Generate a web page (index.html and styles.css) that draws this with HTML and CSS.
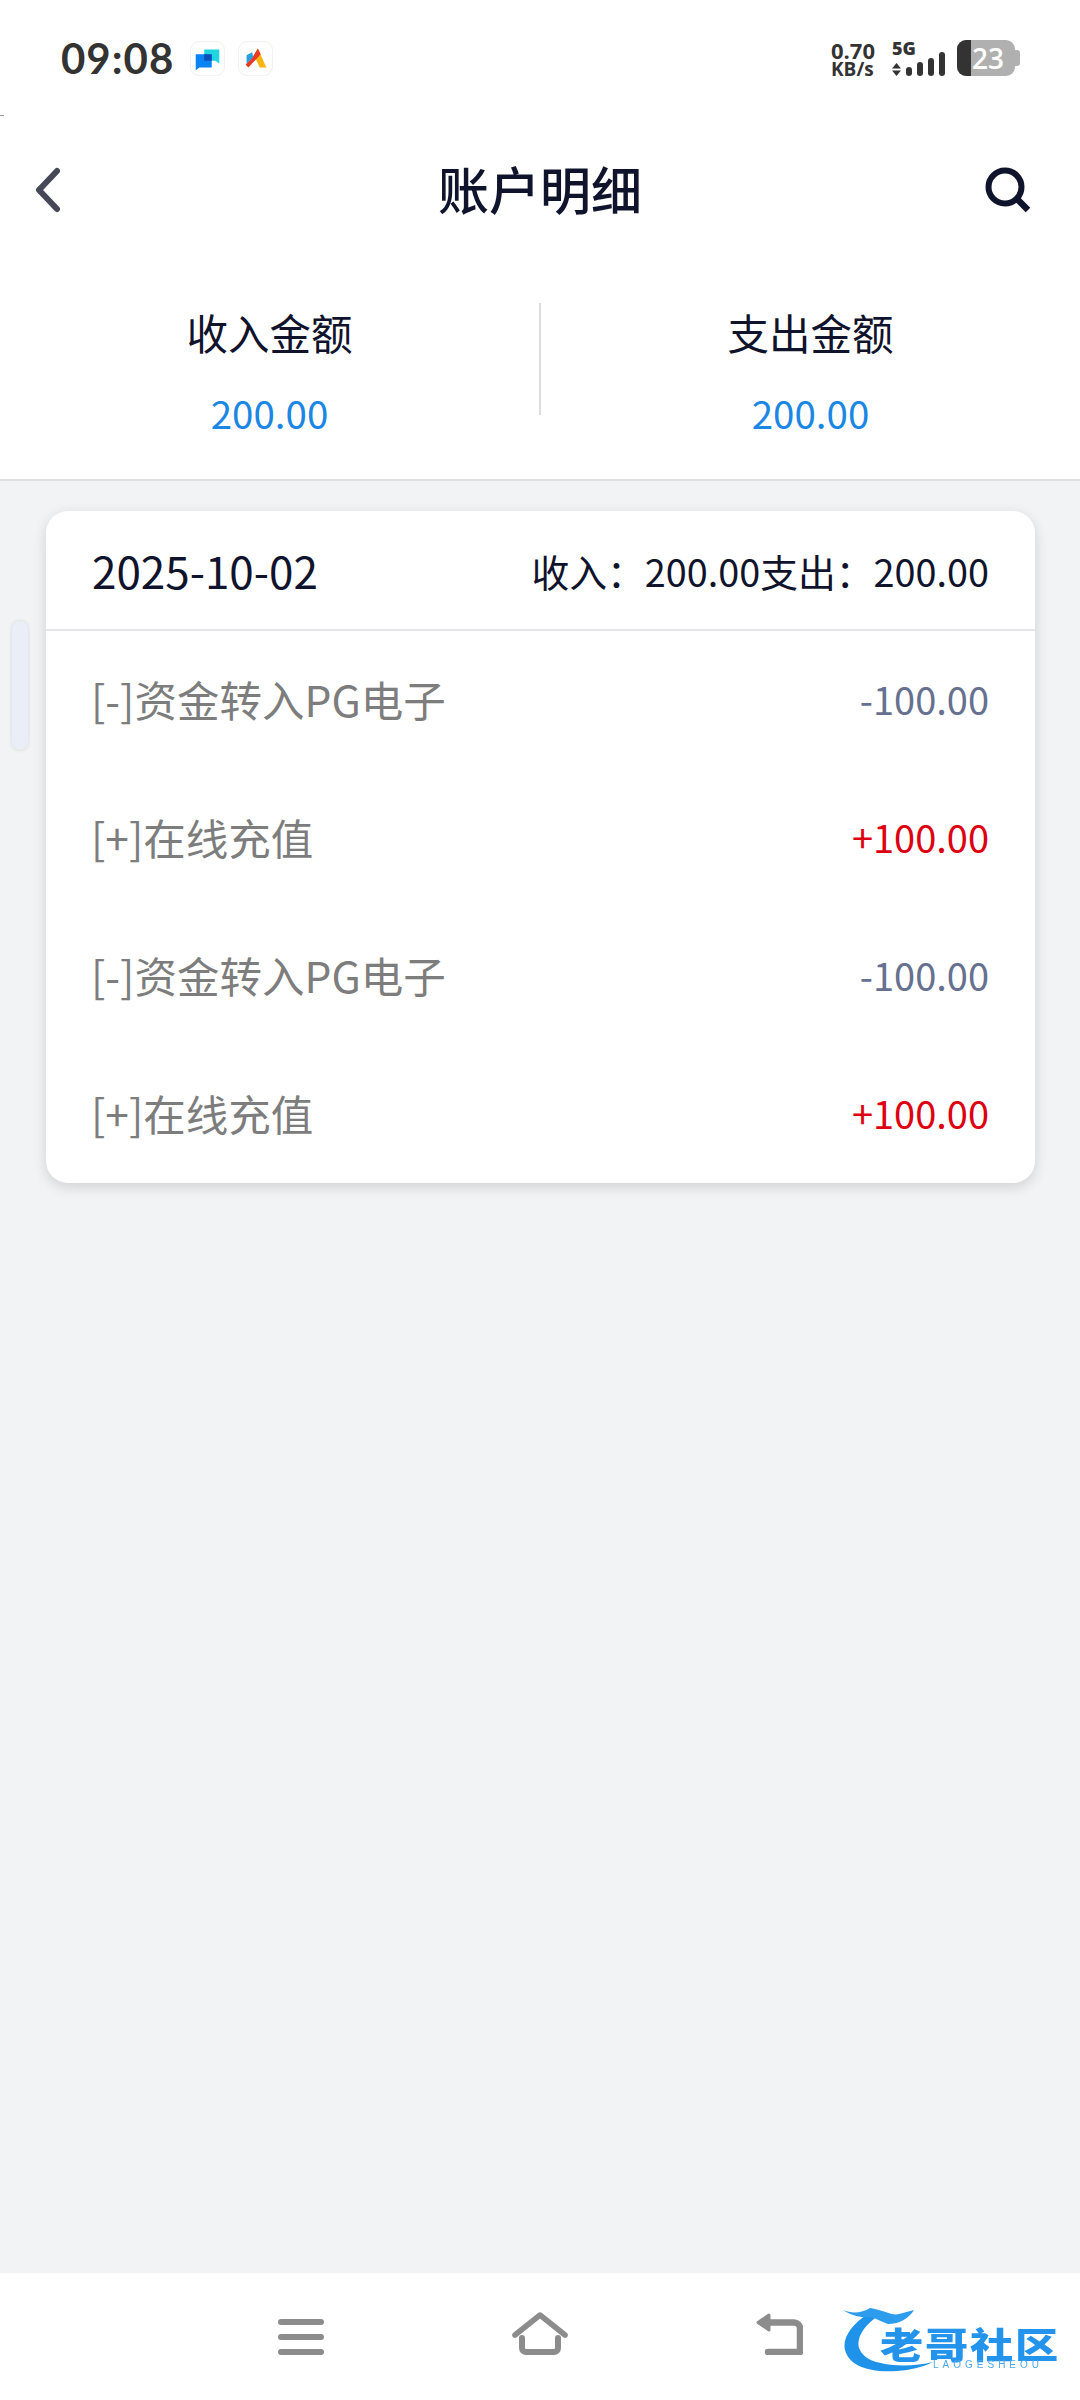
FILE: index.html
```html
<!DOCTYPE html>
<html lang="zh-CN">
<head>
<meta charset="utf-8">
<title>账户明细</title>
<link rel="stylesheet" href="styles.css">
</head>
<body>
<div class="page">
  <div class="status">
    <div class="status-left">
      <span class="time">09:08</span>
      <span class="app-icon">
        <svg viewBox="0 0 35 35" width="33" height="33"><path d="M14 8h16v15l-4-3H14z" fill="#1fd6e0"/><path d="M5 13h17v14H9l-4 3z" fill="#0a84f5"/><path d="M14 13h8v7h-8z" fill="#0b4fb8"/></svg>
      </span>
      <span class="app-icon">
        <svg viewBox="0 0 35 35" width="33" height="33"><path d="M20 7l9 20h-7l-6-13z" fill="#fbb40f"/><path d="M20 7l3 6-13 14-3-3 8-9z" fill="#ea3a26"/><path d="M8 14l6-3 1 5-7 7z" fill="#22a3e0"/></svg>
      </span>
    </div>
    <div class="status-right">
      <div class="speed"><span class="speed-num">0.70</span><span class="speed-unit">KB/s</span></div>
      <div class="signal">
        <span class="net">5G</span>
        <div class="bars">
          <svg class="arrows" viewBox="0 0 9 13" width="9" height="13"><path d="M4.500 0L9 5.500H0zM4.500 13L0 7.500h9z" fill="#333"/></svg>
          <i class="bar b1"></i><i class="bar b2"></i><i class="bar b3"></i><i class="bar b4"></i>
        </div>
      </div>
      <div class="battery"><i class="battery-fill"></i><span class="battery-num">23</span></div><i class="battery-cap"></i>
    </div>
  </div>

  <header class="nav">
    <svg class="nav-back" viewBox="0 0 28 46" width="28" height="46"><path d="M23 4L5 23l18 19" fill="none" stroke="#474857" stroke-width="6" stroke-linecap="round" stroke-linejoin="round"/></svg>
    <h1 class="nav-title">账户明细</h1>
    <svg class="nav-search" viewBox="0 0 46 46" width="46" height="46"><circle cx="20" cy="20" r="16.500" fill="none" stroke="#10132c" stroke-width="6"/><path d="M32 32l11 11" stroke="#10132c" stroke-width="6.500"/></svg>
  </header>

  <section class="summary">
    <div class="sum-col"><div class="sum-label">收入金额</div><div class="sum-value">200.00</div></div>
    <div class="sum-rule"></div>
    <div class="sum-col"><div class="sum-label">支出金额</div><div class="sum-value">200.00</div></div>
  </section>

  <main class="content">
    <section class="card">
      <div class="card-head">
        <span class="date">2025-10-02</span>
        <span class="totals">收入：200.00支出：200.00</span>
      </div>
      <div class="row"><span class="row-name">[-]资金转入PG电子</span><span class="amt out">-100.00</span></div>
      <div class="row"><span class="row-name">[+]在线充值</span><span class="amt in">+100.00</span></div>
      <div class="row"><span class="row-name">[-]资金转入PG电子</span><span class="amt out">-100.00</span></div>
      <div class="row"><span class="row-name">[+]在线充值</span><span class="amt in">+100.00</span></div>
    </section>
  </main>

  <nav class="sysbar">
    <svg viewBox="0 0 46 36" width="46" height="36"><path d="M3 3h40M3 18h40M3 33h40" stroke="#8c8c8c" stroke-width="6" stroke-linecap="round"/></svg>
    <svg viewBox="0 0 56 43" width="56" height="43"><path d="M3 23L28 3l25 20" fill="none" stroke="#8c8c8c" stroke-width="5.500" stroke-linecap="round" stroke-linejoin="round"/><path d="M10 26v10a4 4 0 0 0 4 4h28a4 4 0 0 0 4-4V26" fill="none" stroke="#8c8c8c" stroke-width="6" stroke-linecap="round"/></svg>
    <svg viewBox="0 0 47 42" width="47" height="42"><path d="M12 9.500H38a6 6 0 0 1 6 6V39H12" fill="none" stroke="#8c8c8c" stroke-width="6.500" stroke-linecap="round" stroke-linejoin="round"/><path d="M2 9.500L13 2v15z" fill="#8c8c8c" stroke="#8c8c8c" stroke-width="3" stroke-linejoin="round"/></svg>
  </nav>

  <i class="speck"></i>
  <div class="thumb"></div>

  <div class="logo">
    <svg class="logo-dragon" viewBox="0 0 110 76" width="110" height="76">
      <path d="M30 14C14 24 4 38 7 50c4 15 22 23 52 21 14-1 26-4 36-9-12 3-26 4-40 3-18-2-30-6-34-17-3-11 6-23 19-32z" fill="#1f93ea"/>
      <path d="M5 10c9 4 19 3 27-2 13 2 22 8 29 6l15-4c-5 8-14 14-26 14-6-2-12-6-18-7C24 18 14 16 5 10z" fill="#2d9cec"/>
    </svg>
    <div class="logo-text">老哥社区</div>
    <div class="logo-sub">LAOGESHEOU</div>
  </div>
</div>
</body>
</html>
```
FILE: styles.css
```css
* { box-sizing: border-box; }
html, body { margin: 0; padding: 0; }
body {
  width: 1080px;
  height: 2400px;
  overflow: hidden;
  font-family: "Noto Sans CJK SC", "Noto Sans", sans-serif;
  background: #fff;
}
.page {
  position: relative;
  width: 1080px;
  height: 2400px;
  display: flex;
  flex-direction: column;
}

/* status bar */
.status {
  height: 116px;
  flex: none;
  padding: 40px 60px 0 61px;
  display: flex;
  justify-content: space-between;
  align-items: flex-start;
  color: #333;
}
.status-left { display: flex; align-items: center; gap: 13px; height: 36px; }
.time {
  font-family: Lato, sans-serif;
  font-weight: 700;
  font-size: 42px;
  line-height: 36px;
  letter-spacing: 1px;
  margin-right: 3px;
}
.app-icon {
  width: 35px;
  height: 35px;
  border-radius: 9px;
  border: 1px solid #f4f1ee;
  display: flex;
  align-items: center;
  justify-content: center;
  overflow: hidden;
}
.status-right { display: flex; align-items: flex-start; }
.speed {
  width: 44px;
  margin-right: 17px;
  display: flex;
  flex-direction: column;
  font-family: "Open Sans", sans-serif;
  font-weight: 700;
  white-space: nowrap;
}
.speed-num { font-size: 22px; line-height: 20px; }
.speed-unit { font-size: 19px; line-height: 18px; }
.signal { width: 53px; margin-right: 12px; }
.net {
  display: block;
  font-family: "Open Sans", sans-serif;
  font-weight: 800;
  font-size: 18px;
  line-height: 16px;
  height: 0;
}
.bars { height: 36px; display: flex; align-items: flex-end; gap: 5px; }
.bar { display: block; width: 6px; background: #333; border-radius: 3px; }
.b1 { height: 9px; }
.b2 { height: 14px; }
.b3 { height: 18px; }
.b4 { height: 24px; }
.battery {
  position: relative;
  width: 58px;
  height: 36px;
  background: #b0b0b0;
  border-radius: 9px;
  overflow: hidden;
}
.battery-fill { position: absolute; left: 0; top: 0; bottom: 0; width: 14px; background: #333; }
.battery-num {
  position: absolute;
  left: 15px;
  top: 0;
  font-family: "Open Sans", sans-serif;
  font-weight: 600;
  font-size: 28px;
  line-height: 36px;
  color: #fff;
}
.battery-cap {
  display: block;
  width: 5px;
  height: 16px;
  margin-top: 10px;
  background: #b0b0b0;
  border-radius: 0 3px 3px 0;
}

/* nav */
.nav {
  flex: none;
  height: 148px;
  padding: 0 34px;
  display: grid;
  grid-template-columns: 1fr auto 1fr;
  align-items: center;
}
.nav-title {
  margin: 0 0 4px;
  font-size: 51px;
  font-weight: 500;
  color: #10132c;
  line-height: 60px;
}
.nav-search { justify-self: end; margin-right: 15px; }

/* summary */
.summary {
  flex: none;
  height: 217px;
  display: flex;
  align-items: flex-start;
  padding-top: 39px;
  border-bottom: 2px solid #dfe0e2;
}
.sum-col { flex: 1; text-align: center; }
.sum-rule { flex: none; width: 2px; height: 112px; background: #dcdde0; }
.sum-label { font-size: 41.500px; line-height: 58px; color: #10132c; }
.sum-value { margin-top: 27px; font-size: 38.500px; line-height: 48px; color: #1a87e4; }

/* list */
.content { flex: 1; background: #f2f3f5; padding: 30px 45px 0 46px; }
.card {
  background: #fff;
  border-radius: 22px;
  box-shadow: 0 4px 14px rgba(0, 0, 0, .14);
}
.card-head {
  height: 120px;
  padding: 0 46px;
  border-bottom: 2px solid #e4e5e8;
  display: flex;
  align-items: center;
  justify-content: space-between;
  color: #10132c;
}
.date { font-size: 44px; }
.totals { font-size: 37.800px; white-space: nowrap; }
.row {
  height: 138px;
  padding: 0 46px 4px 45px;
  display: flex;
  align-items: center;
  justify-content: space-between;
}
.row-name { font-size: 42.500px; color: #7d7d7d; }
.amt { font-size: 38px; }
.out { color: #66708f; }
.in { color: #dd0011; }

/* system bar */
.sysbar {
  flex: none;
  height: 127px;
  background: #fff;
  display: flex;
  align-items: flex-end;
  justify-content: center;
  gap: 188px;
  padding-bottom: 45px;
}

/* overlays */
.speck {
  position: absolute;
  left: 0;
  top: 115px;
  width: 4px;
  height: 1px;
  background: #999;
}
.thumb {
  position: absolute;
  left: 12px;
  top: 621px;
  width: 16px;
  height: 129px;
  background: #e9eef7;
  border-radius: 8px;
  box-shadow: 0 0 4px rgba(0, 0, 0, .12);
}
.logo {
  position: absolute;
  left: 838px;
  top: 2300px;
  width: 236px;
  height: 80px;
  filter: blur(.5px);
}
.logo-dragon { position: absolute; left: 0; top: 0; }
.logo-text {
  position: absolute;
  left: 42px;
  top: 27px;
  font-weight: 900;
  font-size: 36px;
  line-height: 32px;
  letter-spacing: 1.500px;
  white-space: nowrap;
  color: #2393ec;
  transform: scaleX(1.200);
  transform-origin: left center;
}
.logo-sub {
  position: absolute;
  left: 95px;
  top: 60px;
  font-family: "Liberation Sans", sans-serif;
  font-size: 10px;
  line-height: 10px;
  letter-spacing: 4px;
  color: #4fa9ea;
  white-space: nowrap;
}
```
